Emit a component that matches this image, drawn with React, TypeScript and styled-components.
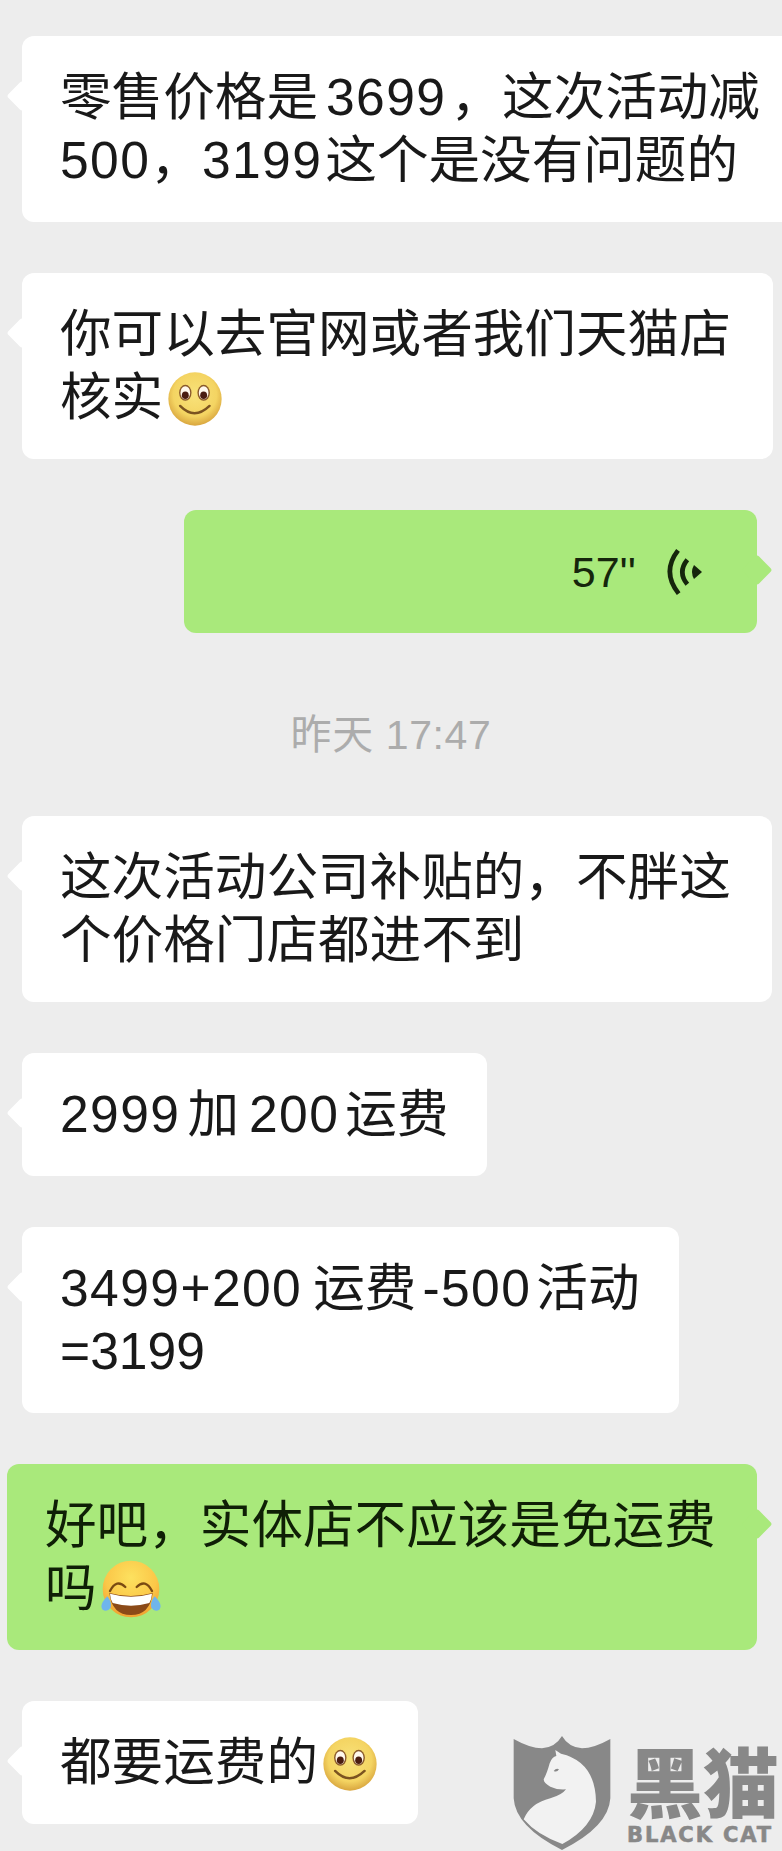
import React from 'react';
import styled, { createGlobalStyle } from 'styled-components';

const BG_COLOR = '#ededed';
const GREEN = '#a9e97b';
const FONT_STACK = '"Liberation Sans", "Noto Sans CJK SC", sans-serif';

const GlobalStyle = createGlobalStyle`
  html, body {
    margin: 0;
    padding: 0;
    background: ${BG_COLOR};
  }
`;

const Page = styled.div`
  position: relative;
  width: 782px;
  height: 1851px;
  overflow: hidden;
  background: ${BG_COLOR};
  padding-top: 36px;
  box-sizing: border-box;
  display: flex;
  flex-direction: column;
  gap: 51px;
  font-family: ${FONT_STACK};
`;

const Row = styled.div<{ $mine?: boolean }>`
  display: flex;
  justify-content: ${p => (p.$mine ? 'flex-end' : 'flex-start')};
  padding: ${p => (p.$mine ? '0 25px 0 0' : '0 0 0 22px')};
`;

// tail is a rotated square sitting half behind the bubble edge
const Bubble = styled.div<{ $mine?: boolean; $width: number }>`
  position: relative;
  flex: none;
  box-sizing: border-box;
  width: ${p => p.$width}px;
  padding: 30px 38px;
  border-radius: 12px;
  background: ${p => (p.$mine ? GREEN : '#ffffff')};
  color: ${p => (p.$mine ? '#0f1f06' : '#191919')};
  font-size: 51.6px;
  line-height: 63px;
  white-space: nowrap;

  &::before {
    content: '';
    position: absolute;
    top: 49px;
    ${p => (p.$mine ? 'right: -11px;' : 'left: -11px;')}
    width: 22px;
    height: 22px;
    border-radius: 3px;
    background: inherit;
    transform: rotate(45deg);
  }
`;

// digits sit a little apart from the CJK text next to them
const Num = styled.span<{ $l?: number; $r?: number; $tight?: boolean }>`
  letter-spacing: ${p => (p.$tight ? 0 : 1.4)}px;
  margin-left: ${p => p.$l ?? 0}px;
  margin-right: ${p => p.$r ?? 0}px;
`;

const Emoji = styled.svg<{ $size: number; $gap: number }>`
  width: ${p => p.$size}px;
  height: ${p => p.$size}px;
  margin: -10px 0 -10px ${p => p.$gap}px;
  vertical-align: ${p => -(p.$size / 2 - 26)}px;
`;

const VoiceBubble = styled(Bubble)`
  display: flex;
  justify-content: flex-end;
  align-items: center;
  height: 123px;
  padding: 0 55px 0 0;
  gap: 30px;
  color: #16260c;
`;

const Duration = styled.span`
  font-size: 43px;
  line-height: 50px;
`;

const TimeStamp = styled.div`
  margin: 26px 0 5px;
  text-align: center;
  color: #acacac;
  font-size: 41px;
  line-height: 50px;
  letter-spacing: 0.6px;
`;

// logo stamped over the bottom right corner
const Watermark = styled.div`
  position: absolute;
  right: 3px;
  bottom: 0;
  display: flex;
  gap: 15px;
  color: #888888;
`;

const Brand = styled.div`
  display: flex;
  flex-direction: column;
  justify-content: flex-end;
  padding-bottom: 4px;
`;

const BrandCn = styled.div`
  margin-bottom: 5px;
  font-family: "Noto Sans CJK SC", sans-serif;
  font-weight: 900;
  font-size: 76px;
  line-height: 78px;
  white-space: nowrap;
`;

const BrandEn = styled.div`
  font-family: "DejaVu Sans", sans-serif;
  font-weight: 700;
  font-size: 21px;
  line-height: 24px;
  letter-spacing: 1.9px;
  white-space: nowrap;
  -webkit-text-stroke: 0.6px #888888;
`;

const Smile = () => (
  <Emoji $size={54} $gap={5} viewBox="0 0 156 156">
    <defs>
      <radialGradient id="smileFace" cx="50%" cy="42%" r="58%">
        <stop offset="0%" stopColor="#f8e27a" />
        <stop offset="70%" stopColor="#f4d462" />
        <stop offset="100%" stopColor="#d9a63f" />
      </radialGradient>
    </defs>
    <circle cx="78" cy="78" r="77" fill="url(#smileFace)" />
    <ellipse cx="50" cy="60" rx="18" ry="23" fill="#8a5a2a" />
    <ellipse cx="103" cy="60" rx="18" ry="23" fill="#8a5a2a" />
    <ellipse cx="50" cy="60" rx="14" ry="19" fill="#fff8ec" />
    <ellipse cx="103" cy="60" rx="14" ry="19" fill="#fff8ec" />
    <ellipse cx="50" cy="67" rx="10" ry="11" fill="#4a1c10" />
    <ellipse cx="103" cy="67" rx="10" ry="11" fill="#4a1c10" />
    <path d="M35 98 Q76 140 120 98" fill="none" stroke="#7b5320" strokeWidth="7" strokeLinecap="round" />
  </Emoji>
);

const Laugh = () => (
  <Emoji $size={62} $gap={3} viewBox="0 0 186 186">
    <defs>
      <radialGradient id="laughFace" cx="50%" cy="30%" r="75%">
        <stop offset="0%" stopColor="#fde15f" />
        <stop offset="60%" stopColor="#fbc748" />
        <stop offset="100%" stopColor="#ef9a2c" />
      </radialGradient>
    </defs>
    <circle cx="93" cy="90" r="85" fill="url(#laughFace)" />
    <path d="M30 96 Q50 58 76 84" fill="none" stroke="#7a4a12" strokeWidth="7" strokeLinecap="round" />
    <path d="M110 84 Q136 58 156 96" fill="none" stroke="#7a4a12" strokeWidth="7" strokeLinecap="round" />
    <path d="M28 102 Q93 120 158 102 Q150 168 93 168 Q36 168 28 102 Z" fill="#8b4a18" />
    <path d="M30 104 Q93 122 156 104 Q155 122 148 132 Q93 148 38 132 Q31 122 30 104 Z" fill="#ffffff" />
    <path d="M22 112 Q36 128 32 146 Q22 160 8 152 Q-4 138 22 112 Z" fill="#6fb5ec" />
    <path d="M164 112 Q150 128 154 146 Q164 160 178 152 Q190 138 164 112 Z" fill="#6fb5ec" />
  </Emoji>
);

const VoiceIcon = () => (
  <svg width="36" height="50" viewBox="0 0 108 150" fill="none">
    <path d="M36 10 Q-14 75 38 140" stroke="#16260c" strokeWidth="14" strokeLinecap="butt" />
    <path d="M64 38 Q34 75 64 112" stroke="#16260c" strokeWidth="14" strokeLinecap="butt" />
    <path d="M84 54 L108 75 L84 96 Q72 75 84 54 Z" fill="#16260c" />
  </svg>
);

const LogoMark = () => (
  <svg width="100" height="116" viewBox="35 45 300 348">
    <path
      d="M40 57 Q90 85 125 85 Q165 82 185 48 Q205 82 245 85 Q280 85 330 57 L330 235 Q325 320 185 390 Q45 320 40 235 Z"
      fill="#888888"
    />
    <path
      d="M165 90 L182 101 Q285 125 287 245 Q280 320 186 372 Q110 345 70 298 Q90 250 150 235 Q185 225 197 208 Q170 210 150 200 Q130 190 130 178 Q140 160 148 130 Q155 110 168 108 Z"
      fill="#f2f2f2"
    />
    <path d="M160 153 Q168 143 176 148 Q170 158 160 153 Z" fill="#888888" />
  </svg>
);

export default function App() {
  return (
    <Page>
      <GlobalStyle />
      <Row>
        <Bubble $width={780}>
          零售价格是<Num $l={8} $r={4}>3699</Num>，这次活动减
          <br />
          <Num>500</Num>，<Num $r={3}>3199</Num>这个是没有问题的
        </Bubble>
      </Row>
      <Row>
        <Bubble $width={751}>
          你可以去官网或者我们天猫店
          <br />
          核实
          <Smile />
        </Bubble>
      </Row>
      <Row $mine>
        <VoiceBubble $mine $width={573}>
          <Duration>57''</Duration>
          <VoiceIcon />
        </VoiceBubble>
      </Row>
      <TimeStamp>昨天 17:47</TimeStamp>
      <Row>
        <Bubble $width={750}>
          这次活动公司补贴的，不胖这
          <br />
          个价格门店都进不到
        </Bubble>
      </Row>
      <Row>
        <Bubble $width={465}>
          <Num $r={7}>2999</Num>加<Num $l={10} $r={6}>200</Num>运费
        </Bubble>
      </Row>
      <Row>
        <Bubble $width={657}>
          <Num $r={11}>3499+200</Num>运费<Num $l={6} $r={5}>-500</Num>活动
          <br />
          <Num $tight>=3199</Num>
        </Bubble>
      </Row>
      <Row $mine>
        <Bubble $mine $width={750}>
          好吧，实体店不应该是免运费
          <br />
          吗
          <Laugh />
        </Bubble>
      </Row>
      <Row>
        <Bubble $width={396}>
          都要运费的
          <Smile />
        </Bubble>
      </Row>
      <Watermark>
        <LogoMark />
        <Brand>
          <BrandCn>黑猫</BrandCn>
          <BrandEn>BLACK CAT</BrandEn>
        </Brand>
      </Watermark>
    </Page>
  );
}
